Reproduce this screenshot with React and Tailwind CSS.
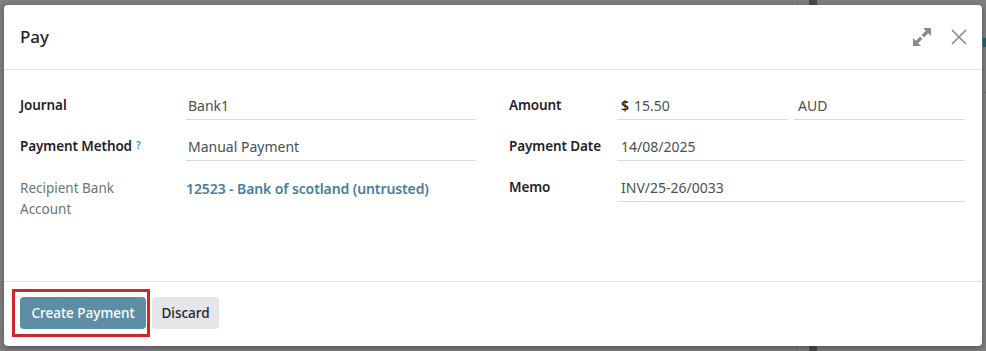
import React from "react";

const font = { fontFamily: '"Noto Sans", "Open Sans", sans-serif' };

function Field({ children, className = "" }) {
  return (
    <div className={"h-[29px] flex items-center border-b border-[#d8dadd] text-[14px] text-[#4a4f55] " + className}>
      {children}
    </div>
  );
}

const label = "pt-[4px] text-[13.5px] font-semibold text-[#1f2327] tracking-[-0.1px]";

export default function App() {
  return (
    <div className="relative w-[986px] h-[351px] bg-[#7f7f7f] overflow-hidden" style={font}>
      {/* background hints */}
      <div className="absolute left-[809px] top-0 w-[8px] h-[351px] bg-[#4a4a4a]" />
      <div className="absolute left-[797px] top-0 w-px h-[351px] bg-[#727272]" />
      <div className="absolute left-[983px] top-[38px] w-[3px] h-[9px] bg-[#1f6470]" />
      <div className="absolute left-[984px] top-[92px] w-[2px] h-px bg-[#6a6a6a]" />

      <div className="absolute left-[4px] top-[5px] w-[978px] h-[341px] bg-white rounded-[4px] shadow-[0_2px_6px_rgba(0,0,0,0.35)] flex flex-col">
        {/* header */}
        <div className="h-[65px] flex items-center justify-between pl-[16px] pr-[14px] border-b border-[#dee2e6]">
          <div className="text-[17px] font-medium text-[#1f2327]">Pay</div>
          <div className="flex items-center gap-[18px]">
            <svg width="20" height="20" viewBox="0 0 20 20" fill="#8a8a8a">
              <path d="M11 1h8v8l-2.8-2.8-4.2 4.2-2.4-2.4 4.2-4.2z" />
              <path d="M9 19H1v-8l2.8 2.8 4.2-4.2 2.4 2.4-4.2 4.2z" />
            </svg>
            <svg width="18" height="18" viewBox="0 0 18 18" stroke="#8a8a8a" strokeWidth="1.6" fill="none">
              <path d="M2 2l14 14M16 2L2 16" />
            </svg>
          </div>
        </div>

        {/* body */}
        <div className="h-[211px] flex pl-[16px] pt-[21px] gap-[33px]">
          {/* left group */}
          <div className="w-[456px] flex flex-col">
            <div className="flex h-[41px]">
              <div className={"w-[166px] " + label}>Journal</div>
              <Field className="w-[290px] pl-[2px]">Bank1</Field>
            </div>
            <div className="flex h-[41px]">
              <div className={"w-[166px] " + label}>
                Payment Method<sup className="text-[#1a9fb5] font-semibold text-[10px] ml-[4px] relative top-[-2px]">?</sup>
              </div>
              <Field className="w-[290px] pl-[2px]">Manual Payment</Field>
            </div>
            <div className="flex">
              <div className="w-[166px] pt-[5px] text-[13.5px] text-[#6c737a] leading-[21px]">
                Recipient Bank<br />Account
              </div>
              <div className="pt-[5px] text-[14px] font-semibold text-[#4a7d9b] leading-[21px] tracking-[-0.1px]">
                12523 - Bank of scotland (untrusted)
              </div>
            </div>
          </div>

          {/* right group */}
          <div className="w-[456px] flex flex-col">
            <div className="flex h-[41px]">
              <div className={"w-[108px] " + label}>Amount</div>
              <Field className="w-[171px] pl-[4px]">
                <span className="font-semibold text-[#1f2327] mr-[5px]">$</span>15.50
              </Field>
              <Field className="w-[171px] ml-[6px] pl-[4px]">AUD</Field>
            </div>
            <div className="flex h-[41px]">
              <div className={"w-[108px] " + label}>Payment Date</div>
              <Field className="w-[348px] pl-[4px]">14/08/2025</Field>
            </div>
            <div className="flex h-[41px]">
              <div className={"w-[108px] " + label}>Memo</div>
              <Field className="w-[348px] pl-[4px]">INV/25-26/0033</Field>
            </div>
          </div>
        </div>

        {/* footer */}
        <div className="relative flex-1 border-t border-[#dee2e6] flex items-start pt-[15px] pl-[16px] gap-[6px]">
          <button className="h-[32px] w-[126px] rounded-[4px] bg-[#5e8ea6] text-white text-[13.5px] font-medium">
            Create Payment
          </button>
          <button className="h-[32px] w-[67px] rounded-[4px] bg-[#e4e6ea] text-[#1f2327] text-[13.5px] font-medium">
            Discard
          </button>
          <div className="absolute left-[8px] top-[7px] w-[138px] h-[48px] border-[3px] border-[#d0262a] pointer-events-none" />
        </div>
      </div>
    </div>
  );
}
